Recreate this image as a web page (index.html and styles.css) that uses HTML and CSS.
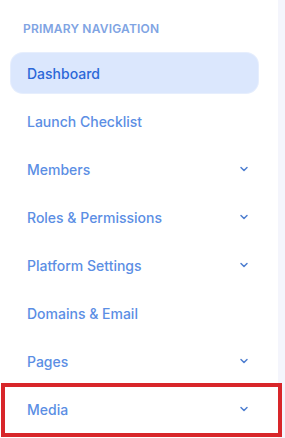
FILE: index.html
```html
<!DOCTYPE html>
<html lang="en">
<head>
<meta charset="utf-8">
<title>Sidebar</title>
<link rel="stylesheet" href="styles.css">
</head>
<body>
<div class="layout">
  <aside class="sidebar">
    <div class="section-title">Primary Navigation</div>
    <nav class="nav">
      <a class="nav-item active">Dashboard</a>
      <a class="nav-item">Launch Checklist</a>
      <a class="nav-item">Members<svg class="chev" viewBox="0 0 12 12"><path d="M3 4.5 L6 7.5 L9 4.5"/></svg></a>
      <a class="nav-item">Roles &amp; Permissions<svg class="chev" viewBox="0 0 12 12"><path d="M3 4.5 L6 7.5 L9 4.5"/></svg></a>
      <a class="nav-item">Platform Settings<svg class="chev" viewBox="0 0 12 12"><path d="M3 4.5 L6 7.5 L9 4.5"/></svg></a>
      <a class="nav-item">Domains &amp; Email</a>
      <a class="nav-item">Pages<svg class="chev" viewBox="0 0 12 12"><path d="M3 4.5 L6 7.5 L9 4.5"/></svg></a>
      <a class="nav-item">Media<svg class="chev" viewBox="0 0 12 12"><path d="M3 4.5 L6 7.5 L9 4.5"/></svg></a>
    </nav>
  </aside>
  <main class="main"></main>
  <div class="highlight"></div>
</div>
</body>
</html>
```

FILE: styles.css
```css
html, body {
  margin: 0;
  padding: 0;
  height: 100%;
  overflow: hidden;
}
body {
  font-family: Inter, "Noto Sans", sans-serif;
  background: #f4f5fc;
}
.layout {
  position: relative;
  display: flex;
  height: 438px;
}
.sidebar {
  width: 278px;
  flex: none;
  background: #ffffff;
  box-sizing: border-box;
  padding: 22px 20px 0 11px;
}
.main {
  flex: 1;
  background: #f4f5fc;
}
.section-title {
  padding-left: 12px;
  font-size: 12px;
  font-weight: 600;
  letter-spacing: 0.2px;
  text-transform: uppercase;
  color: #7fa4e3;
  line-height: 14px;
  margin-bottom: 17px;
}
.nav {
  display: flex;
  flex-direction: column;
  gap: 8px;
}
.nav-item {
  display: flex;
  align-items: center;
  justify-content: space-between;
  height: 40px;
  padding: 0 8px 0 16px;
  border-radius: 12px;
  font-size: 14px;
  font-weight: 500;
  color: #5b8ee4;
  text-decoration: none;
}
.nav-item.active {
  background: #dbe7fd;
  color: #2c68d8;
  box-shadow: 0 0 0 1px #e6eefd;
}
.chev {
  width: 12px;
  height: 12px;
  fill: none;
  stroke: #4f7fd0;
  stroke-width: 1.5;
  stroke-linecap: round;
  stroke-linejoin: round;
}
.highlight {
  position: absolute;
  left: 1px;
  top: 383px;
  width: 281px;
  height: 54px;
  box-sizing: border-box;
  border: 4px solid #d8262a;
  pointer-events: none;
}
```
